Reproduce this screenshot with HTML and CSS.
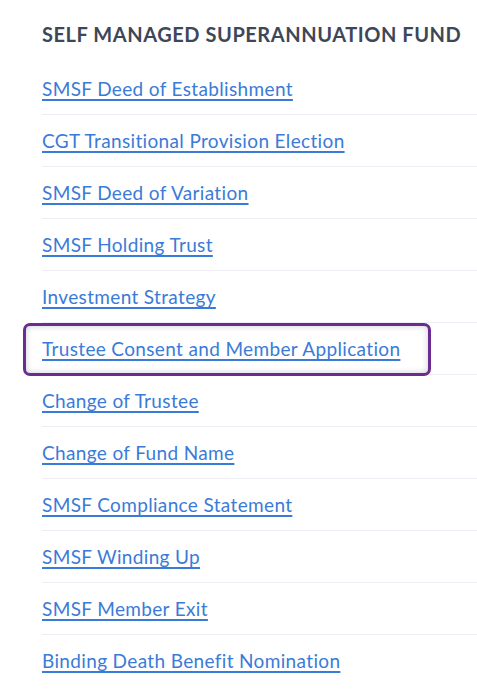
FILE: index.html
```html
<!DOCTYPE html>
<html>
<head>
<meta charset="utf-8">
<link rel="stylesheet" href="styles.css">
</head>
<body>
<div class="panel">
  <h2 class="title">SELF MANAGED SUPERANNUATION FUND</h2>
  <ul class="list">
    <li class="item"><a href="#">SMSF Deed of Establishment</a></li>
    <li class="item"><a href="#">CGT Transitional Provision Election</a></li>
    <li class="item"><a href="#">SMSF Deed of Variation</a></li>
    <li class="item"><a href="#">SMSF Holding Trust</a></li>
    <li class="item"><a href="#">Investment Strategy</a></li>
    <li class="item highlighted"><a href="#">Trustee Consent and Member Application</a><span class="ring"></span></li>
    <li class="item"><a href="#">Change of Trustee</a></li>
    <li class="item"><a href="#">Change of Fund Name</a></li>
    <li class="item"><a href="#">SMSF Compliance Statement</a></li>
    <li class="item"><a href="#">SMSF Winding Up</a></li>
    <li class="item"><a href="#">SMSF Member Exit</a></li>
    <li class="item"><a href="#">Binding Death Benefit Nomination</a></li>
  </ul>
</div>
</body>
</html>
```
FILE: styles.css
```css
html, body {
  margin: 0;
  padding: 0;
  background: #ffffff;
}
.panel {
  padding-left: 42px;
  font-family: "Lato", "Liberation Sans", sans-serif;
}
.title {
  margin: 0;
  height: 63px;
  display: flex;
  align-items: center;
  padding-top: 4px;
  box-sizing: border-box;
  font-size: 20px;
  font-weight: 700;
  color: #3d4757;
  letter-spacing: 0.55px;
}
.list {
  list-style: none;
  margin: 0;
  padding: 0;
}
.item {
  position: relative;
  height: 51px;
  display: flex;
  align-items: center;
  border-bottom: 1px solid #eceef4;
}
.item:last-child {
  border-bottom: none;
}
.item a {
  color: #3a7bd8;
  font-size: 19px;
  letter-spacing: 0.35px;
  text-decoration: underline;
  text-decoration-thickness: 1.5px;
  text-underline-offset: 3px;
}
.ring {
  position: absolute;
  left: -19px;
  top: 0;
  width: 408px;
  height: 53px;
  box-sizing: border-box;
  border: 3.5px solid #6a2c91;
  border-radius: 7px;
  box-shadow: inset 0 0 6px rgba(0,0,0,0.2);
  pointer-events: none;
}
```
